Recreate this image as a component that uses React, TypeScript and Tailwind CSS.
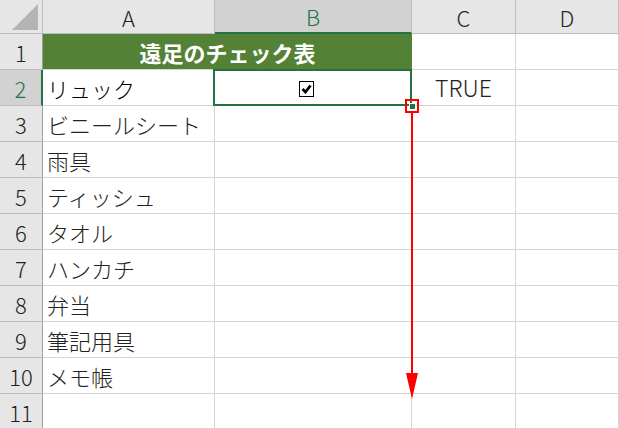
import React from 'react'

const font = { fontFamily: '"Noto Sans CJK JP", "Liberation Sans", sans-serif' }

const items = ['ビニールシート', '雨具', 'ティッシュ', 'タオル', 'ハンカチ', '弁当', '筆記用具', 'メモ帳', '']

function ColHead({ label, selected }: { label: string; selected?: boolean }) {
  return (
    <div
      className={
        selected
          ? 'flex items-center justify-center bg-[#d2d2d2] text-[#217346] border-r border-[#bdbdbd] border-b-2 border-b-[#217346]'
          : 'flex items-center justify-center bg-[#e6e6e6] text-[#222] border-r border-[#bdbdbd] border-b border-b-[#bdbdbd]'
      }
    >
      {label}
    </div>
  )
}

function RowHead({ n, selected }: { n: number; selected?: boolean }) {
  return (
    <div
      className={
        selected
          ? 'flex items-center justify-center bg-[#d2d2d2] text-[#217346] border-b border-[#bdbdbd] border-r-2 border-r-[#217346]'
          : 'flex items-center justify-center bg-[#e6e6e6] text-[#222] border-b border-[#bdbdbd] border-r border-r-[#9f9f9f]'
      }
    >
      {n}
    </div>
  )
}

function Cell({ children, className = '' }: { children?: React.ReactNode; className?: string }) {
  return <div className={`flex items-center border-r border-b border-[#d4d4d4] bg-white ${className}`}>{children}</div>
}

export default function App() {
  return (
    <div className="w-[619px] h-[428px] overflow-hidden bg-white text-[22px] leading-none font-light" style={font}>
      <div className="grid grid-cols-[43px_172px_197px_104px_1fr] grid-rows-[34px_repeat(11,36px)]">
        {/* header row */}
        <div className="relative bg-[#e6e6e6] border-r border-b border-[#bdbdbd]">
          <svg className="absolute left-0 top-0" width="42" height="33" viewBox="0 0 42 33">
            <polygon points="38,4 38,30 12,30" fill="#b4b4b4" />
          </svg>
        </div>
        <ColHead label="A" />
        <ColHead label="B" selected />
        <ColHead label="C" />
        <ColHead label="D" />

        {/* row 1 */}
        <RowHead n={1} />
        <div className="col-span-2 flex items-center justify-center bg-[#538135] text-white font-bold border-b border-[#d4d4d4]">
          遠足のチェック表
        </div>
        <Cell />
        <Cell />

        {/* row 2 */}
        <RowHead n={2} selected />
        <Cell className="pl-1">リュック</Cell>
        <Cell className="relative justify-center">
          <div className="w-[15px] h-[16px] border border-black flex items-center justify-center -ml-[14px] mt-[3px]">
            <svg width="11" height="10" viewBox="0 0 11 10">
              <path d="M1.5 5 L4.5 8 L9.5 1.5" fill="none" stroke="black" strokeWidth="2.8" />
            </svg>
          </div>
          <div className="absolute -left-[2px] -top-[1px] -right-[1px] -bottom-[1px] border-2 border-[#217346] pointer-events-none" />
          <div className="absolute -right-[8px] -bottom-[8px] w-[14px] h-[14px] border-2 border-[#ff0000] flex items-center justify-center">
            <div className="w-[7px] h-[7px] bg-[#217346] border border-white" />
          </div>
          <svg className="absolute -right-[7px] top-[41px]" width="12" height="288" viewBox="0 0 12 288">
            <line x1="6" y1="0" x2="6" y2="266" stroke="#ff0000" strokeWidth="2" />
            <polygon points="0,262 12,262 6,288" fill="#ff0000" />
          </svg>
        </Cell>
        <Cell className="justify-center text-[#222] text-[23px]">TRUE</Cell>
        <Cell />

        {items.map((t, i) => (
          <React.Fragment key={i}>
            <RowHead n={i + 3} />
            <Cell className="pl-1 text-[#222]">{t}</Cell>
            <Cell />
            <Cell />
            <Cell />
          </React.Fragment>
        ))}
      </div>
    </div>
  )
}
